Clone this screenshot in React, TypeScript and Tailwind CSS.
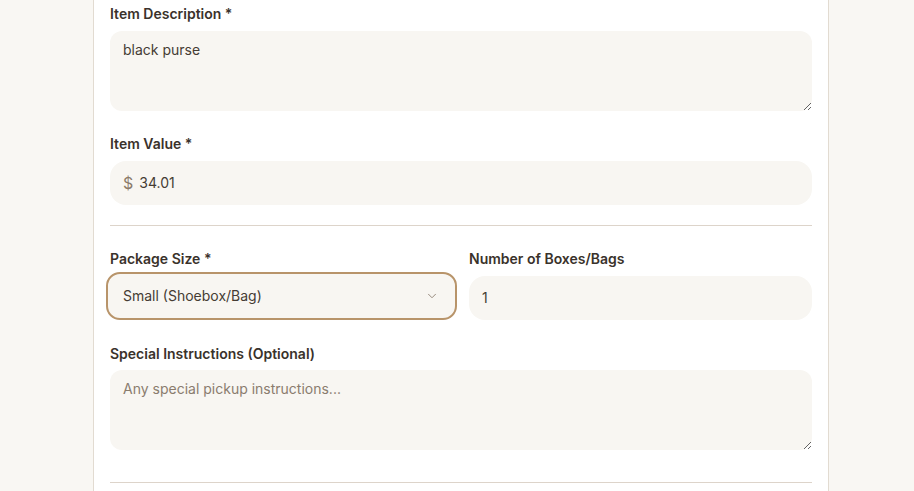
import { ChevronDown } from 'lucide-react'

const labelCls = 'block mb-[7px] text-sm leading-5 font-semibold text-[#3a322b]'
const fieldBg = 'bg-[#f8f6f2] text-[#453c34] text-sm'

export default function App() {
  return (
    <div
      className="min-h-[491px] h-[491px] overflow-hidden bg-[#f9f7f3]"
      style={{ fontFamily: 'Inter, "Noto Sans", sans-serif' }}
    >
      <div className="ml-[93px] w-[736px] h-full bg-white border-x border-[#e2dbd1] px-4 pt-[4px]">
        <div>
          <label className={labelCls}>Item Description *</label>
          <textarea
            readOnly
            value="black purse"
            className={`${fieldBg} block w-full h-20 rounded-xl pl-[13px] pr-3 pt-[9px] outline-none resize-y`}
          />
        </div>

        <div className="mt-[23px]">
          <label className={labelCls}>Item Value *</label>
          <div className={`${fieldBg} flex items-center h-11 rounded-2xl pl-[13px]`}>
            <span className="text-base text-[#8b7a69] mr-[6px]">$</span>
            <span>34.01</span>
          </div>
        </div>

        <div className="mt-5 border-t border-[#ddd4ca]" />

        <div className="mt-[23px] grid grid-cols-2 gap-4">
          <div>
            <label className={labelCls}>Package Size *</label>
            <div className="relative -mt-[4px] -mx-[4px] -mb-[4px]">
              <select
                className={`${fieldBg} appearance-none block w-full h-[48px] rounded-[14px] border-2 border-[#b8946a] pl-[15px] outline-none`}
                defaultValue="small"
              >
                <option value="small">Small (Shoebox/Bag)</option>
              </select>
              <ChevronDown
                size={14}
                strokeWidth={1.5}
                className="absolute right-[18px] top-1/2 -translate-y-1/2 text-[#8a7c6e] pointer-events-none"
              />
            </div>
          </div>
          <div>
            <label className={labelCls}>Number of Boxes/Bags</label>
            <div className={`${fieldBg} flex items-center h-11 rounded-2xl pl-[13px]`}>1</div>
          </div>
        </div>

        <div className="mt-6">
          <label className="block mb-[6px] text-sm leading-5 font-semibold text-[#3a322b]">
            Special Instructions (Optional)
          </label>
          <textarea
            readOnly
            placeholder="Any special pickup instructions..."
            className={`${fieldBg} block w-full h-20 rounded-xl pl-[13px] pr-3 pt-[9px] outline-none resize-y placeholder:text-[#8a7c6e]`}
          />
        </div>

        <div className="mt-8 border-t border-[#ddd4ca]" />
      </div>
    </div>
  )
}
